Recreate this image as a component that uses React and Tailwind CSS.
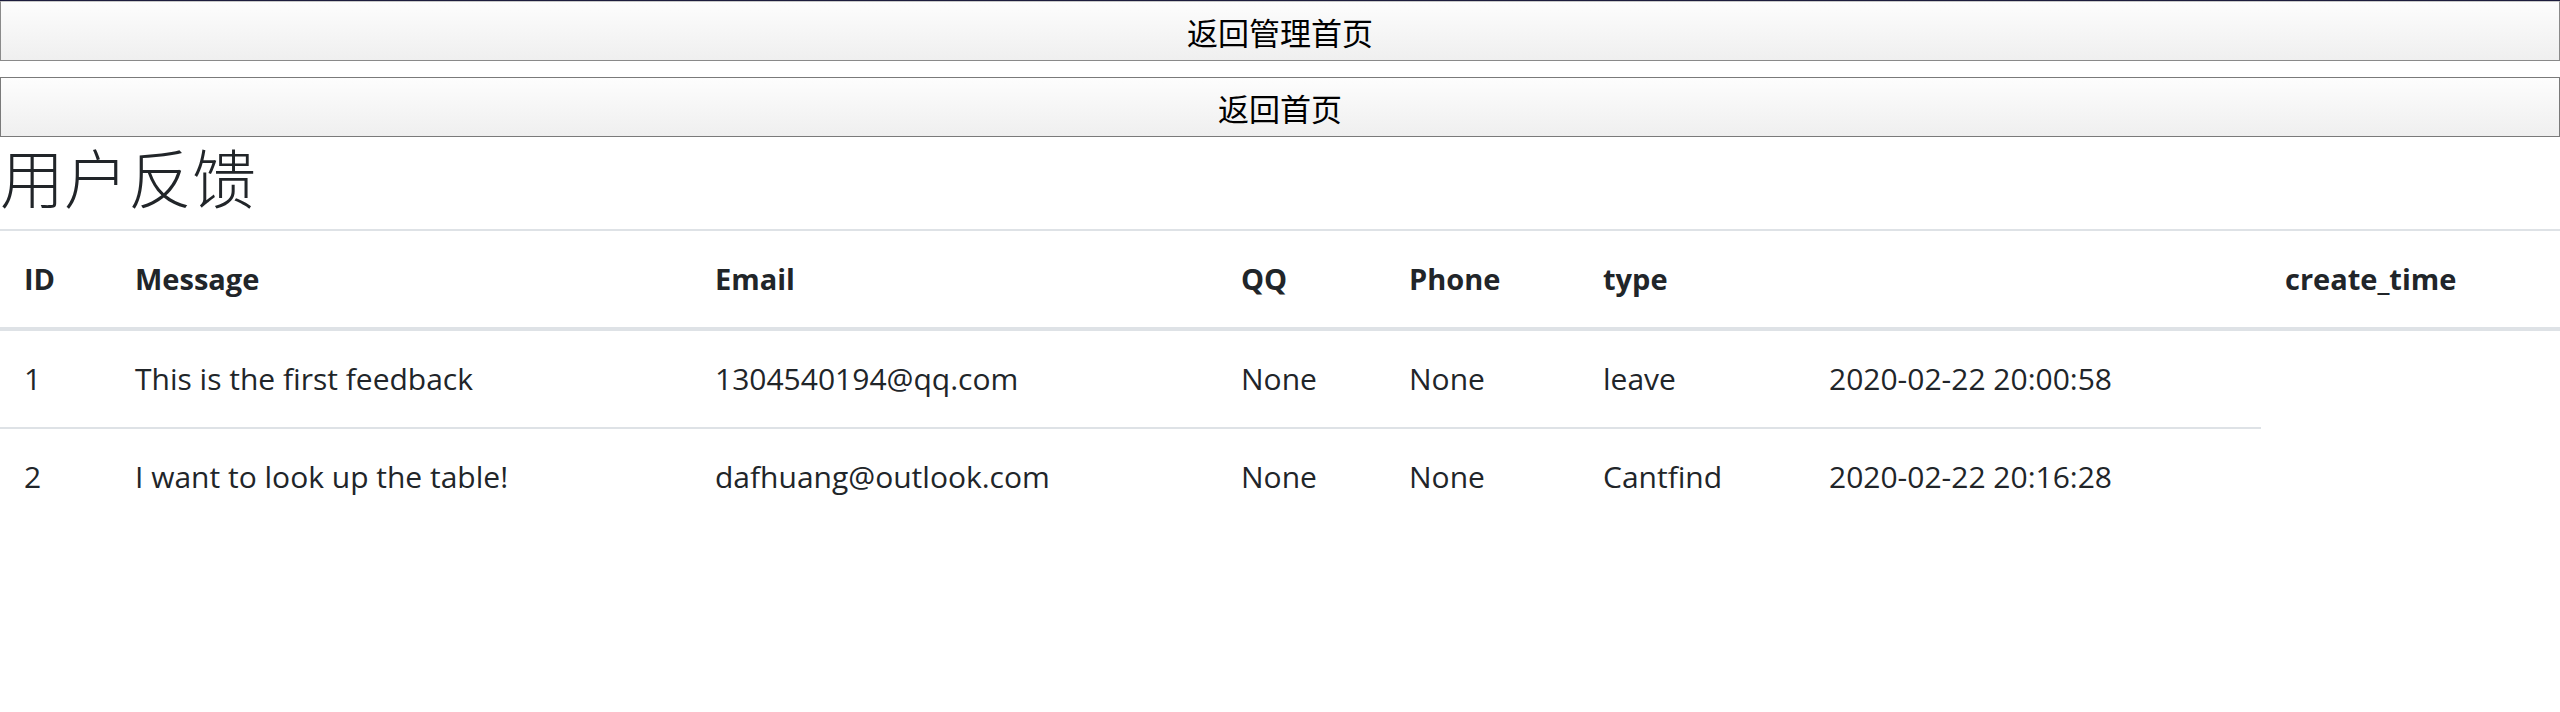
import React from "react";

const cols = [111, 580, 526, 168, 194, 226, 456, 299];

const rows = [
  ["1", "This is the first feedback", "1304540194@qq.com", "None", "None", "leave", "2020-02-22 20:00:58"],
  ["2", "I want to look up the table!", "dafhuang@outlook.com", "None", "None", "Cantfind", "2020-02-22 20:16:28"],
];

const headers = ["ID", "Message", "Email", "QQ", "Phone", "type", "", "create_time"];

export default function App() {
  return (
    <div className="w-[2560px] h-[712px] bg-white text-[#212529] font-['Open_Sans',sans-serif] overflow-hidden">
      <div className="h-px bg-[#1c1c3c]" />
      <div className="flex flex-col gap-[16px]">
        <button className="block w-full h-[60px] border border-[#8a8a8a] border-t-[#c9c9c9] bg-gradient-to-b from-[#fdfdfd] to-[#efefef] text-black text-[31px] leading-none font-['Noto_Sans_CJK_SC',sans-serif]">
          返回管理首页
        </button>
        <button className="block w-full h-[60px] border border-[#7a7a7a] bg-gradient-to-b from-[#fdfdfd] to-[#efefef] text-black text-[31px] leading-none font-['Noto_Sans_CJK_SC',sans-serif]">
          返回首页
        </button>
      </div>
      <h2 className="text-[64px] leading-[77px] mb-[15px] font-light text-[#212529] font-['Noto_Sans_CJK_SC',sans-serif]">
        用户反馈
      </h2>
      <table className="w-[2560px] table-fixed border-separate border-spacing-0 text-[30px] leading-[48px]">
        <colgroup>
          {cols.map((w, i) => (
            <col key={i} style={{ width: w }} />
          ))}
        </colgroup>
        <thead>
          <tr>
            {headers.map((h, i) => (
              <th
                key={i}
                className="text-left font-bold text-[29px] px-[24px] py-[24px] border-t-2 border-b-4 border-[#dee2e6] align-bottom whitespace-nowrap"
              >
                {h}
              </th>
            ))}
          </tr>
        </thead>
        <tbody>
          {rows.map((r, ri) => (
            <tr key={ri}>
              {r.map((c, ci) => (
                <td
                  key={ci}
                  className={
                    "px-[24px] py-[24px] align-top whitespace-nowrap " +
                    (ri > 0 ? "border-t-2 border-[#dee2e6]" : "")
                  }
                >
                  {c}
                </td>
              ))}
            </tr>
          ))}
        </tbody>
      </table>
    </div>
  );
}
